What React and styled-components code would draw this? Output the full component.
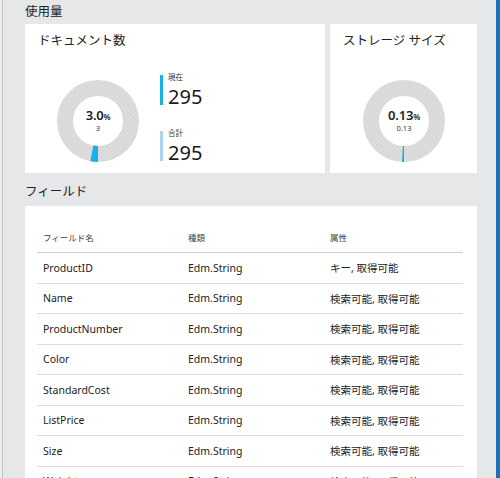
import React from "react";
import styled, { createGlobalStyle } from "styled-components";

const Global = createGlobalStyle`
  html, body { margin: 0; padding: 0; overflow: hidden; }
  body {
    background: #e6e7e9;
    font-family: "Noto Sans", "Noto Sans CJK JP", sans-serif;
    color: #222;
  }
`;

const Frame = styled.div`
  display: flex;
  height: 478px;
  overflow: hidden;
  background: #e6e7e9;
`;

const LeftEdge = styled.div`
  width: 2px;
  flex: none;
  background: #ececec;
  border-right: 1px solid #c2c2c2;
`;

const Main = styled.main`
  flex: 1;
  min-width: 0;
  padding: 0 19px 0 22px;
`;

const BlueBar = styled.div`
  width: 4px;
  flex: none;
  background: #2070b8;
`;

const SectionTitle = styled.h2`
  margin: 0;
  height: ${(p) => p.$h}px;
  padding-top: ${(p) => p.$pt}px;
  box-sizing: border-box;
  font-size: 12.5px;
  line-height: 20px;
  font-weight: 400;
  color: #222;
`;

const CardRow = styled.div`
  display: grid;
  grid-template-columns: 300px 147px;
  gap: 5px;
`;

const Card = styled.section`
  background: #fff;
  height: 149px;
  box-sizing: border-box;
  padding: 7px 12px 0 13px;
`;

const CardTitle = styled.h3`
  margin: 0;
  font-size: 12.5px;
  line-height: 20px;
  font-weight: 400;
  color: #222;
`;

const CardBody = styled.div`
  display: flex;
  align-items: flex-start;
  justify-content: ${(p) => (p.$center ? "center" : "flex-start")};
  padding-left: ${(p) => (p.$center ? 0 : 19)}px;
  gap: 21px;
`;

const DonutWrap = styled.div`
  position: relative;
  width: 82px;
  height: 82px;
  margin-top: 29px;
  flex: none;
`;

const DonutLabel = styled.div`
  position: absolute;
  inset: 0;
  display: flex;
  flex-direction: column;
  align-items: center;
  justify-content: center;
  padding-bottom: 2px;
`;

const Pct = styled.div`
  font-size: 13px;
  font-weight: 600;
  line-height: 14px;
  color: #222;
  letter-spacing: -0.2px;
  span {
    font-size: 8px;
    font-weight: 600;
  }
`;

const Sub = styled.div`
  font-size: 7.5px;
  line-height: 9px;
  color: #333;
`;

const Legend = styled.div`
  display: flex;
  flex-direction: column;
  gap: 26px;
  margin-top: 24px;
`;

const LegendItem = styled.div`
  display: flex;
  flex-direction: column;
  border-left: 3px solid ${(p) => p.$color};
  padding-left: 5px;
  height: 30px;
  box-sizing: border-box;
  overflow: visible;
`;

const LegendLabel = styled.div`
  font-size: 7.5px;
  line-height: 8px;
  height: 8px;
  margin-top: -2px;
  color: #333;
  flex: none;
`;

const LegendValue = styled.div`
  font-size: 20px;
  line-height: 27px;
  height: 27px;
  margin-top: 1.5px;
  color: #1a1a1a;
  flex: none;
`;

const TableCard = styled.section`
  background: #fff;
  padding: 16px 14px 0 12px;
`;

const Table = styled.div`
  display: flex;
  flex-direction: column;
`;

const Row = styled.div`
  display: grid;
  grid-template-columns: 145px 142px 1fr;
  align-items: center;
  height: ${(p) => (p.$head ? 31 : 30.5)}px;
  box-sizing: border-box;
  border-bottom: 1px solid ${(p) => (p.$head ? "#cfcfcf" : "#dcdcdc")};
`;

const Cell = styled.div`
  padding-left: 6px;
  font-size: ${(p) => (p.$head ? 8.5 : 10.5)}px;
  color: ${(p) => (p.$head ? "#444" : "#222")};
  white-space: nowrap;
`;

function Donut({ value, pct, sub }) {
  const r = 33;
  const c = 2 * Math.PI * r;
  const len = Math.max((pct / 100) * c, 1.6);
  const id = "hatch" + sub.replace(".", "");
  return (
    <DonutWrap>
      <svg width="82" height="82" viewBox="0 0 82 82">
        <defs>
          <pattern id={id} width="3" height="3" patternUnits="userSpaceOnUse" patternTransform="rotate(45)">
            <rect width="3" height="3" fill="#d7d7d7" />
            <rect width="1" height="3" fill="#e2e2e2" />
          </pattern>
        </defs>
        <circle cx="41" cy="41" r={r} fill="none" stroke={`url(#${id})`} strokeWidth="16" />
        <circle
          cx="41"
          cy="41"
          r={r}
          fill="none"
          stroke="#1ab0e6"
          strokeWidth="16"
          strokeDasharray={`${len} ${c}`}
          transform="rotate(90 41 41)"
        />
      </svg>
      <DonutLabel>
        <Pct>
          {value}
          <span>%</span>
        </Pct>
        <Sub>{sub}</Sub>
      </DonutLabel>
    </DonutWrap>
  );
}

const rows = [
  ["ProductID", "Edm.String", "キー, 取得可能"],
  ["Name", "Edm.String", "検索可能, 取得可能"],
  ["ProductNumber", "Edm.String", "検索可能, 取得可能"],
  ["Color", "Edm.String", "検索可能, 取得可能"],
  ["StandardCost", "Edm.String", "検索可能, 取得可能"],
  ["ListPrice", "Edm.String", "検索可能, 取得可能"],
  ["Size", "Edm.String", "検索可能, 取得可能"],
  ["Weight", "Edm.String", "検索可能, 取得可能"],
  ["ProductCategoryID", "Edm.String", "検索可能, 取得可能"],
];

export default function App() {
  return (
    <>
      <Global />
      <Frame>
        <LeftEdge />
        <Main>
          <SectionTitle $h={24} $pt={2}>使用量</SectionTitle>
          <CardRow>
            <Card>
              <CardTitle>ドキュメント数</CardTitle>
              <CardBody>
                <Donut value="3.0" pct={3} sub="3" />
                <Legend>
                  <LegendItem $color="#1ab0e6">
                    <LegendLabel>現在</LegendLabel>
                    <LegendValue>295</LegendValue>
                  </LegendItem>
                  <LegendItem $color="#a8d5ef">
                    <LegendLabel>合計</LegendLabel>
                    <LegendValue>295</LegendValue>
                  </LegendItem>
                </Legend>
              </CardBody>
            </Card>
            <Card>
              <CardTitle>ストレージ サイズ</CardTitle>
              <CardBody $center>
                <Donut value="0.13" pct={0.13} sub="0.13" />
              </CardBody>
            </Card>
          </CardRow>
          <SectionTitle $h={33} $pt={9}>フィールド</SectionTitle>
          <TableCard>
            <Table>
              <Row $head>
                <Cell $head>フィールド名</Cell>
                <Cell $head>種類</Cell>
                <Cell $head>属性</Cell>
              </Row>
              {rows.map((r) => (
                <Row key={r[0]}>
                  <Cell>{r[0]}</Cell>
                  <Cell>{r[1]}</Cell>
                  <Cell>{r[2]}</Cell>
                </Row>
              ))}
            </Table>
          </TableCard>
        </Main>
        <BlueBar />
      </Frame>
    </>
  );
}
